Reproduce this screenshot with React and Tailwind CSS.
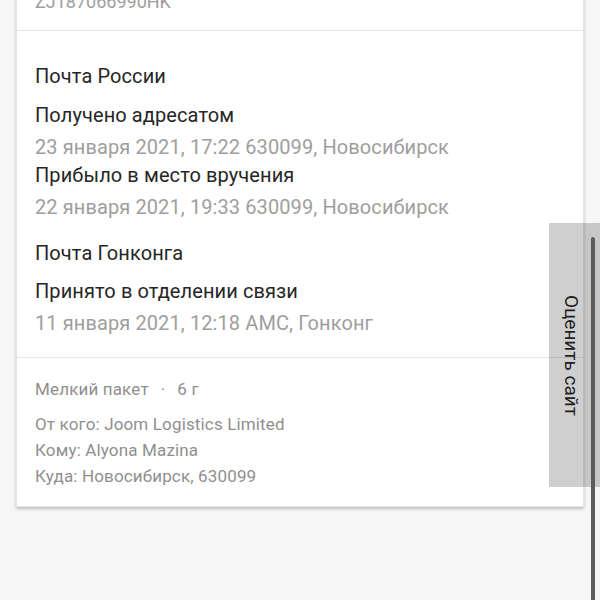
import React from "react";

const events = [
  {
    carrier: "Почта России",
    items: [
      { status: "Получено адресатом", info: "23 января 2021, 17:22 630099, Новосибирск", gap: "mt-[15px]" },
      { status: "Прибыло в место вручения", info: "22 января 2021, 19:33 630099, Новосибирск", gap: "mt-[4px]" },
    ],
  },
  {
    carrier: "Почта Гонконга",
    items: [
      { status: "Принято в отделении связи", info: "11 января 2021, 12:18 AMC, Гонконг", gap: "mt-[14px]" },
    ],
  },
];

const App = () => {
  return (
    <div
      className="relative h-[600px] overflow-hidden bg-[#f6f6f6] px-[16px]"
      style={{ fontFamily: "Roboto, 'Noto Sans', sans-serif" }}
    >
      <div className="-mt-[11px] border border-[#e4e4e4] bg-white shadow-[0_2px_3px_rgba(0,0,0,0.22)]">
        {/* track number */}
        <div className="border-b border-[#e6e6e6] pb-[16px] pl-[18px] text-[18px] leading-[24px] text-[#9e9e9e]">
          ZJ187066990HK
        </div>

        {/* history */}
        <div className="border-b border-[#e6e6e6] pb-[22px] pl-[18px] pt-[33px] text-[20px] leading-[24px] tracking-[0.1px]">
          {events.map((group, gi) => (
            <div key={group.carrier} className={gi > 0 ? "mt-[22px]" : ""}>
              <div className="text-[#262626]">{group.carrier}</div>
              {group.items.map((it) => (
                <div key={it.info}>
                  <div className={`${it.gap} text-[#262626]`}>{it.status}</div>
                  <div className="mt-[8px] text-[#9e9e9e]">{it.info}</div>
                </div>
              ))}
            </div>
          ))}
        </div>

        {/* parcel details */}
        <div className="pb-[17px] pl-[18px] pt-[19px] text-[17px] tracking-[0.15px] text-[#8f8f8f]">
          <div className="flex items-center leading-[24px]">
            <span>Мелкий пакет</span>
            <span className="mx-[12px]">·</span>
            <span>6 г</span>
          </div>
          <div className="mt-[10px] leading-[26px]">
            <div>От кого: Joom Logistics Limited</div>
            <div>Кому: Alyona Mazina</div>
            <div>Куда: Новосибирск, 630099</div>
          </div>
        </div>
      </div>

      {/* rate site tab */}
      <div className="absolute left-[549px] top-[223px] flex h-[264px] w-[51px] items-center justify-center bg-[rgba(0,0,0,0.19)] pr-[8px]">
        <span className="text-[19px] leading-[20px] text-[#1f1f1f] [writing-mode:vertical-rl]">
          Оценить сайт
        </span>
      </div>

      {/* scrollbar */}
      <div className="absolute left-[591px] top-[237px] h-[380px] w-[4px] rounded-t-full bg-[#5c5c5c]" />
    </div>
  );
};

export default App;
